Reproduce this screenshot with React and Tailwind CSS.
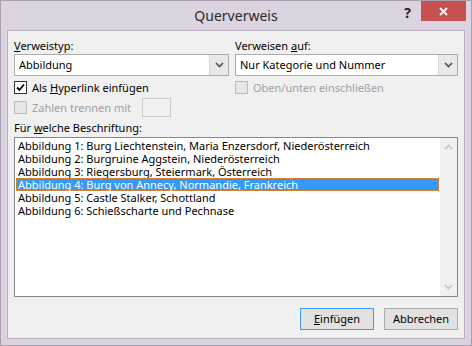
const font = { fontFamily: '"Noto Sans", "Open Sans", sans-serif' };

function Chevron({ up = false, className = "" }) {
  return (
    <svg width="9" height="6" viewBox="0 0 9 6" className={className}>
      <path
        d={up ? "M1 5 L4.5 1.5 L8 5" : "M1 1 L4.5 4.5 L8 1"}
        fill="none"
        stroke="currentColor"
        strokeWidth="1.6"
      />
    </svg>
  );
}

function Select({ value }) {
  return (
    <div className="flex h-[22px] border border-[#acacac] bg-white">
      <div className="flex flex-1 items-center pl-[4px] text-[11px] text-black">
        {value}
      </div>
      <div className="flex w-[19px] items-center justify-center border-l border-[#d6d6d6] bg-[#e8e8e8] text-[#505050]">
        <Chevron />
      </div>
    </div>
  );
}

function CheckBox({ checked = false, disabled = false }) {
  return (
    <div
      className={
        "flex h-[13px] w-[13px] shrink-0 items-center justify-center border " +
        (disabled ? "border-[#bcbcbc] bg-[#e6e6e6]" : "border-[#333333] bg-white")
      }
    >
      {checked && (
        <svg width="9" height="9" viewBox="0 0 9 9">
          <path d="M1 4.5 L3.5 7 L8 1.5" fill="none" stroke="#000" strokeWidth="1.8" />
        </svg>
      )}
    </div>
  );
}

const items = [
  "Abbildung 1: Burg Liechtenstein, Maria Enzersdorf, Niederösterreich",
  "Abbildung 2: Burgruine Aggstein, Niederösterreich",
  "Abbildung 3: Riegersburg, Steiermark, Österreich",
  "Abbildung 4: Burg von Annecy, Normandie, Frankreich",
  "Abbildung 5: Castle Stalker, Schottland",
  "Abbildung 6: Schießscharte und Pechnase",
];

export default function App() {
  return (
    <div
      style={font}
      className="flex h-[346px] w-[472px] flex-col border border-[#a99fae] bg-[#dbd3df]"
    >
      <div className="relative h-[29px]">
        <div className="pt-[6px] text-center text-[14px] leading-[18px] text-[#2b2b2b]">
          Querverweis
        </div>
        <div className="absolute right-[5px] top-0 flex items-start">
          <div className="mr-[10px] mt-[3px] text-[14px] font-bold leading-[18px] text-[#222]">
            ?
          </div>
          <div className="flex h-[20px] w-[45px] items-center justify-center bg-[#c75050]">
            <svg width="9" height="9" viewBox="0 0 9 9">
              <path d="M1 1 L8 8 M8 1 L1 8" stroke="#fff" strokeWidth="1.8" />
            </svg>
          </div>
        </div>
      </div>

      <div className="mx-[6px] mb-[6px] flex flex-1 flex-col border border-[#b8aebc] bg-[#f0f0f0] px-[6px] pt-[7px] text-[11px] text-black">
        <div className="grid grid-cols-[215px_223px] gap-x-[6px]">
          <div className="flex flex-col">
            <div className="h-[16px] leading-[16px]">
              <span className="underline">V</span>erweistyp:
            </div>
            <Select value="Abbildung" />
            <div className="mt-[4px] flex h-[15px] items-center gap-[5px]">
              <CheckBox checked />
              <span className="leading-[15px]">
                Als <span className="underline">H</span>yperlink einfügen
              </span>
            </div>
            <div className="mt-[3px] flex h-[19px] items-center">
              <CheckBox disabled />
              <span className="ml-[5px] w-[105px] leading-[16px] text-[#a0a0a0]">
                Zahlen trennen mit
              </span>
              <div className="ml-[5px] h-[19px] w-[29px] border border-[#cccccc] bg-[#f0f0f0]" />
            </div>
          </div>
          <div className="flex flex-col">
            <div className="h-[16px] leading-[16px]">
              Verweisen <span className="underline">a</span>uf:
            </div>
            <Select value="Nur Kategorie und Nummer" />
            <div className="mt-[4px] flex h-[15px] items-center gap-[5px]">
              <CheckBox disabled />
              <span className="leading-[15px] text-[#a0a0a0]">Oben/unten einschließen</span>
            </div>
          </div>
        </div>

        <div className="mt-[3px] h-[16px] leading-[16px]">
          Für <span className="underline">w</span>elche Beschriftung:
        </div>
        <div className="mt-[1px] flex h-[160px] w-[444px] border border-[#828790] bg-white">
          <div className="flex flex-1 flex-col p-[1px]">
            {items.map((t, i) => (
              <div
                key={t}
                className={
                  "h-[13px] whitespace-nowrap pl-[1px] text-[11px] leading-[11px] " +
                  (i === 3
                    ? "border border-dotted border-[#d98a3d] bg-[#3399ff] text-white"
                    : "border border-transparent text-black")
                }
              >
                {t}
              </div>
            ))}
          </div>
          <div className="flex w-[17px] flex-col items-center justify-between bg-[#f0f0f0] py-[6px] text-[#c2c2c2]">
            <Chevron up />
            <Chevron />
          </div>
        </div>

        <div className="mt-[11px] flex justify-end gap-[10px]">
          <button className="flex h-[22px] w-[74px] items-center justify-center border border-[#3c9cf0] bg-[#e1e1e1] text-[11px] text-black">
            <span>
              <span className="underline">E</span>infügen
            </span>
          </button>
          <button className="flex h-[22px] w-[74px] items-center justify-center border border-[#adadad] bg-[#e1e1e1] text-[11px] text-black">
            Abbrechen
          </button>
        </div>
      </div>
    </div>
  );
}
